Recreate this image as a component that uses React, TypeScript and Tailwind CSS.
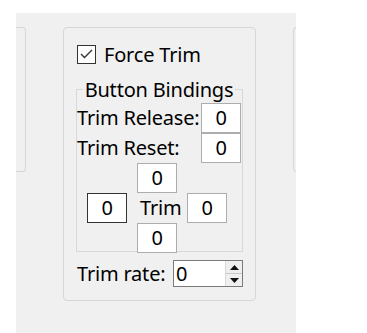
import { useState } from 'react';

function BindBox({ value, dark }: { value: string; dark?: boolean }) {
  return (
    <div
      className={`flex h-[30px] w-[40px] shrink-0 items-center justify-center border bg-white ${
        dark ? 'border-[#333333]' : 'border-[#adadad]'
      }`}
    >
      {value}
    </div>
  );
}

function SpinBox({ value }: { value: number }) {
  return (
    <div className="flex h-[27px] w-[70px] shrink-0 border border-[#7a7a7a] bg-white">
      <div className="flex flex-1 items-center pl-[2px]">{value}</div>
      <div className="flex w-[17px] flex-col border-l border-[#dadada] bg-[#efefef]">
        <div className="flex flex-1 items-center justify-center border-b border-[#c8c8c8]">
          <svg width="9" height="5" viewBox="0 0 9 5">
            <path d="M0 5 L4.5 0 L9 5 Z" fill="#111" />
          </svg>
        </div>
        <div className="flex flex-1 items-center justify-center">
          <svg width="9" height="5" viewBox="0 0 9 5">
            <path d="M0 0 L4.5 5 L9 0 Z" fill="#111" />
          </svg>
        </div>
      </div>
    </div>
  );
}

export default function App() {
  const [checked, setChecked] = useState(true);

  return (
    <div className="h-[333px] w-[367px] bg-white pl-[16px] pt-[13px] font-['Noto_Sans',sans-serif] text-[20px] leading-none tracking-[-0.2px] text-black">
      <div className="flex h-[320px] w-[280px] items-start gap-[37px] overflow-hidden bg-[#f0f0f0] pt-[14px]">
        {/* left panel, mostly cut off */}
        <div className="h-[145px] w-[10px] shrink-0 rounded-r-[4px] border border-l-0 border-[#d6d6d6]" />

        {/* force trim panel */}
        <div className="flex h-[274px] w-[193px] shrink-0 flex-col rounded-[4px] border border-[#d6d6d6] px-[12px] pt-[16px]">
          <label className="flex h-[20px] cursor-default items-center gap-[8px] pl-[1px]">
            <span
              onClick={() => setChecked(!checked)}
              className="flex h-[19px] w-[19px] items-center justify-center border border-[#333333] bg-white"
            >
              {checked && (
                <svg width="13" height="10" viewBox="0 0 13 10">
                  <path d="M1 5 L4.5 8.5 L12 1" fill="none" stroke="#333" strokeWidth="1.4" />
                </svg>
              )}
            </span>
            <span className="pt-[2px]">Force Trim</span>
          </label>

          <fieldset className="mt-[13px] h-[175px] border border-[#d8d8d8] pr-[1px]">
            <legend className="mx-auto h-[24px] px-[2px] leading-[26px]">Button Bindings</legend>
            <div className="mt-[2px] flex items-center justify-between">
              <span className="whitespace-nowrap">Trim Release:</span>
              <BindBox value="0" />
            </div>
            <div className="flex items-center justify-between">
              <span>Trim Reset:</span>
              <BindBox value="0" />
            </div>
            <div className="ml-[10px] grid grid-cols-[40px_40px_40px] grid-rows-[30px_30px_30px] gap-x-[10px]">
              <div />
              <BindBox value="0" />
              <div />
              <BindBox value="0" dark />
              <div className="flex items-center pl-[3px]">Trim</div>
              <BindBox value="0" />
              <div />
              <BindBox value="0" />
              <div />
            </div>
          </fieldset>

          <div className="mt-[8px] flex items-center justify-between pl-[1px]">
            <span>Trim rate:</span>
            <SpinBox value={0} />
          </div>
        </div>

        {/* right panel, mostly cut off */}
        <div className="h-[145px] w-[10px] shrink-0 rounded-l-[4px] border border-r-0 border-[#d6d6d6]" />
      </div>
    </div>
  );
}
